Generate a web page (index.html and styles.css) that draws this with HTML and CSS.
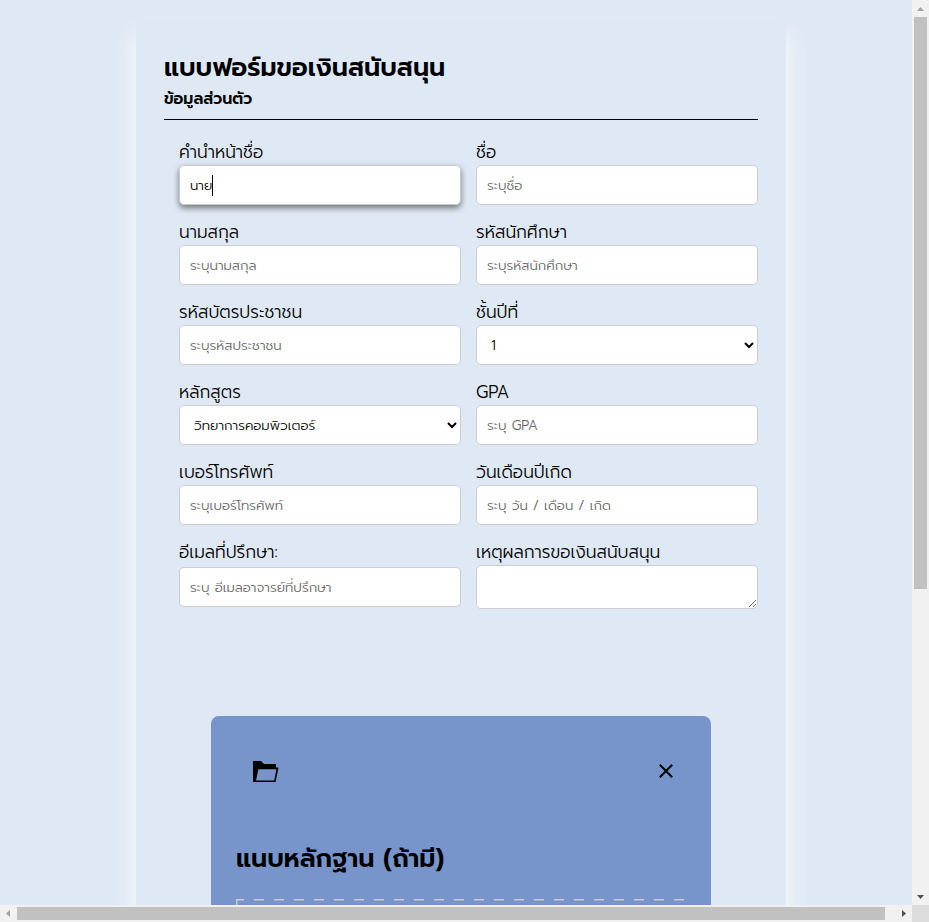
FILE: index.html
```html
<!DOCTYPE html>
<html lang="th">
<head>
<meta charset="utf-8">
<title>แบบฟอร์มขอเงินสนับสนุน</title>
<link rel="stylesheet" href="styles.css">
</head>
<body>
<div class="window">
  <main class="viewport">
    <section class="card">
      <h1>แบบฟอร์มขอเงินสนับสนุน</h1>
      <h2>ข้อมูลส่วนตัว</h2>
      <form class="fields">
        <div class="field"><label>คำนำหน้าชื่อ</label><div class="active-field"><input class="active" type="text" value="นาย"><span class="caret"></span></div></div>
        <div class="field"><label>ชื่อ</label><input type="text" placeholder="ระบุชื่อ"></div>
        <div class="field"><label>นามสกุล</label><input type="text" placeholder="ระบุนามสกุล"></div>
        <div class="field"><label>รหัสนักศึกษา</label><input type="text" placeholder="ระบุรหัสนักศึกษา"></div>
        <div class="field"><label>รหัสบัตรประชาชน</label><input type="text" placeholder="ระบุรหัสประชาชน"></div>
        <div class="field"><label>ชั้นปีที่</label><select><option>1</option></select></div>
        <div class="field"><label>หลักสูตร</label><select><option>วิทยาการคอมพิวเตอร์</option></select></div>
        <div class="field"><label>GPA</label><input type="text" placeholder="ระบุ GPA"></div>
        <div class="field"><label>เบอร์โทรศัพท์</label><input type="text" placeholder="ระบุเบอร์โทรศัพท์"></div>
        <div class="field"><label>วันเดือนปีเกิด</label><input type="text" placeholder="ระบุ วัน / เดือน / เกิด"></div>
        <div class="field email"><label>อีเมลที่ปรึกษา:</label><input type="text" placeholder="ระบุ อีเมลอาจารย์ที่ปรึกษา"></div>
        <div class="field"><label>เหตุผลการขอเงินสนับสนุน</label><textarea></textarea></div>
      </form>
      <section class="upload">
        <div class="upload-head">
          <svg class="folder" width="26" height="22" viewBox="0 0 26 22"><path fill-rule="evenodd" d="M0 0H8L11 3H23V6.5H25.5L22.5 21H0ZM5.4 8.2 3 19.5H21.2L23.5 8.2Z"/></svg>
          <svg class="close" width="14" height="14" viewBox="0 0 14 14"><path d="M.8.8 13.2 13.2M13.2.8.8 13.2" stroke="#000" stroke-width="2"/></svg>
        </div>
        <h3>แนบหลักฐาน (ถ้ามี)</h3>
        <div class="dropzone"></div>
      </section>
    </section>
  </main>
  <div class="bar vertical">
    <svg width="17" height="17"><path d="M5 11h7L8.500 7z" fill="#a3a3a3"/></svg>
    <div class="thumb"></div>
    <svg width="17" height="17"><path d="M5 7h7L8.500 11z" fill="#505050"/></svg>
  </div>
  <div class="bar horizontal">
    <svg width="17" height="17"><path d="M10 5v7L6 8.500z" fill="#a3a3a3"/></svg>
    <div class="thumb"></div>
    <svg width="17" height="17"><path d="M7 5v7L11 8.500z" fill="#505050"/></svg>
  </div>
  <div class="corner"></div>
</div>
</body>
</html>
```
FILE: styles.css
```css
* { box-sizing: border-box; margin: 0; padding: 0; font-family: "Prompt", "Noto Sans Thai", sans-serif; }
body { overflow: hidden; }
.window { display: grid; grid-template: 905px 17px / 912px 17px; width: 929px; height: 922px; }
.viewport { overflow: hidden; background: #dfe9f5; padding: 20px 126px 0 136px; }
.card { width: 650px; height: 1200px; padding: 28px; background: #dfe9f5; box-shadow: 0 15px 20px #fff; }
h1 { font-size: 25.35px; font-weight: 600; line-height: 38px; padding-top: 1px; }
h2 { font-size: 15.8px; font-weight: 600; line-height: 24px; height: 33px; border-bottom: 1px solid #000; }
.fields { display: grid; grid-template-columns: 282px 282px; gap: 15px; padding: 20px 0 0 15px; }
.field { display: flex; flex-direction: column; }
label { display: block; height: 25px; line-height: 24px; font-size: 17.15px; font-weight: 300; }
.email input { margin-top: 2px; }
input, select, textarea { display: block; width: 100%; height: 40px; border: 1px solid #ccc; border-radius: 5px; background: #fff; color: #000; padding: 0 10px; font-size: 13.4px; font-weight: 300; outline: none; }
input::placeholder { color: #666; }
textarea { height: 44px; }
.active { box-shadow: 0 3px 6px rgba(0, 0, 0, .5); }
.active-field { position: relative; }
.caret { position: absolute; left: 33px; top: 10px; width: 1px; height: 21px; background: #000; }
.upload { width: 500px; height: 600px; margin: 107px 0 0 47px; padding: 45px 25px 0; background: #7895cb; border-radius: 8px; }
.upload-head { display: flex; justify-content: space-between; padding: 0 13px 0 17px; height: 79px; }
.close { margin-top: 3px; }
h3 { font-size: 25.35px; font-weight: 600; line-height: 38px; height: 59px; }
.dropzone { height: 200px; background: repeating-linear-gradient(90deg, #ccc 0 8px, transparent 8px 18px, #ccc 18px 20px) 0 0 / 100% 1.5px no-repeat, linear-gradient(#ccc, #ccc) 0 0 / 1.500px 8px no-repeat; }
.bar { display: flex; background: #f1f1f1; }
.bar svg { flex: none; }
.vertical { flex-direction: column; }
.vertical .thumb { height: 572px; margin: 0 2px auto; }
.thumb { background: #c1c1c1; }
.horizontal .thumb { width: 868px; margin: 2px auto 2px 0; }
.corner { background: #dcdcdc; }
```
